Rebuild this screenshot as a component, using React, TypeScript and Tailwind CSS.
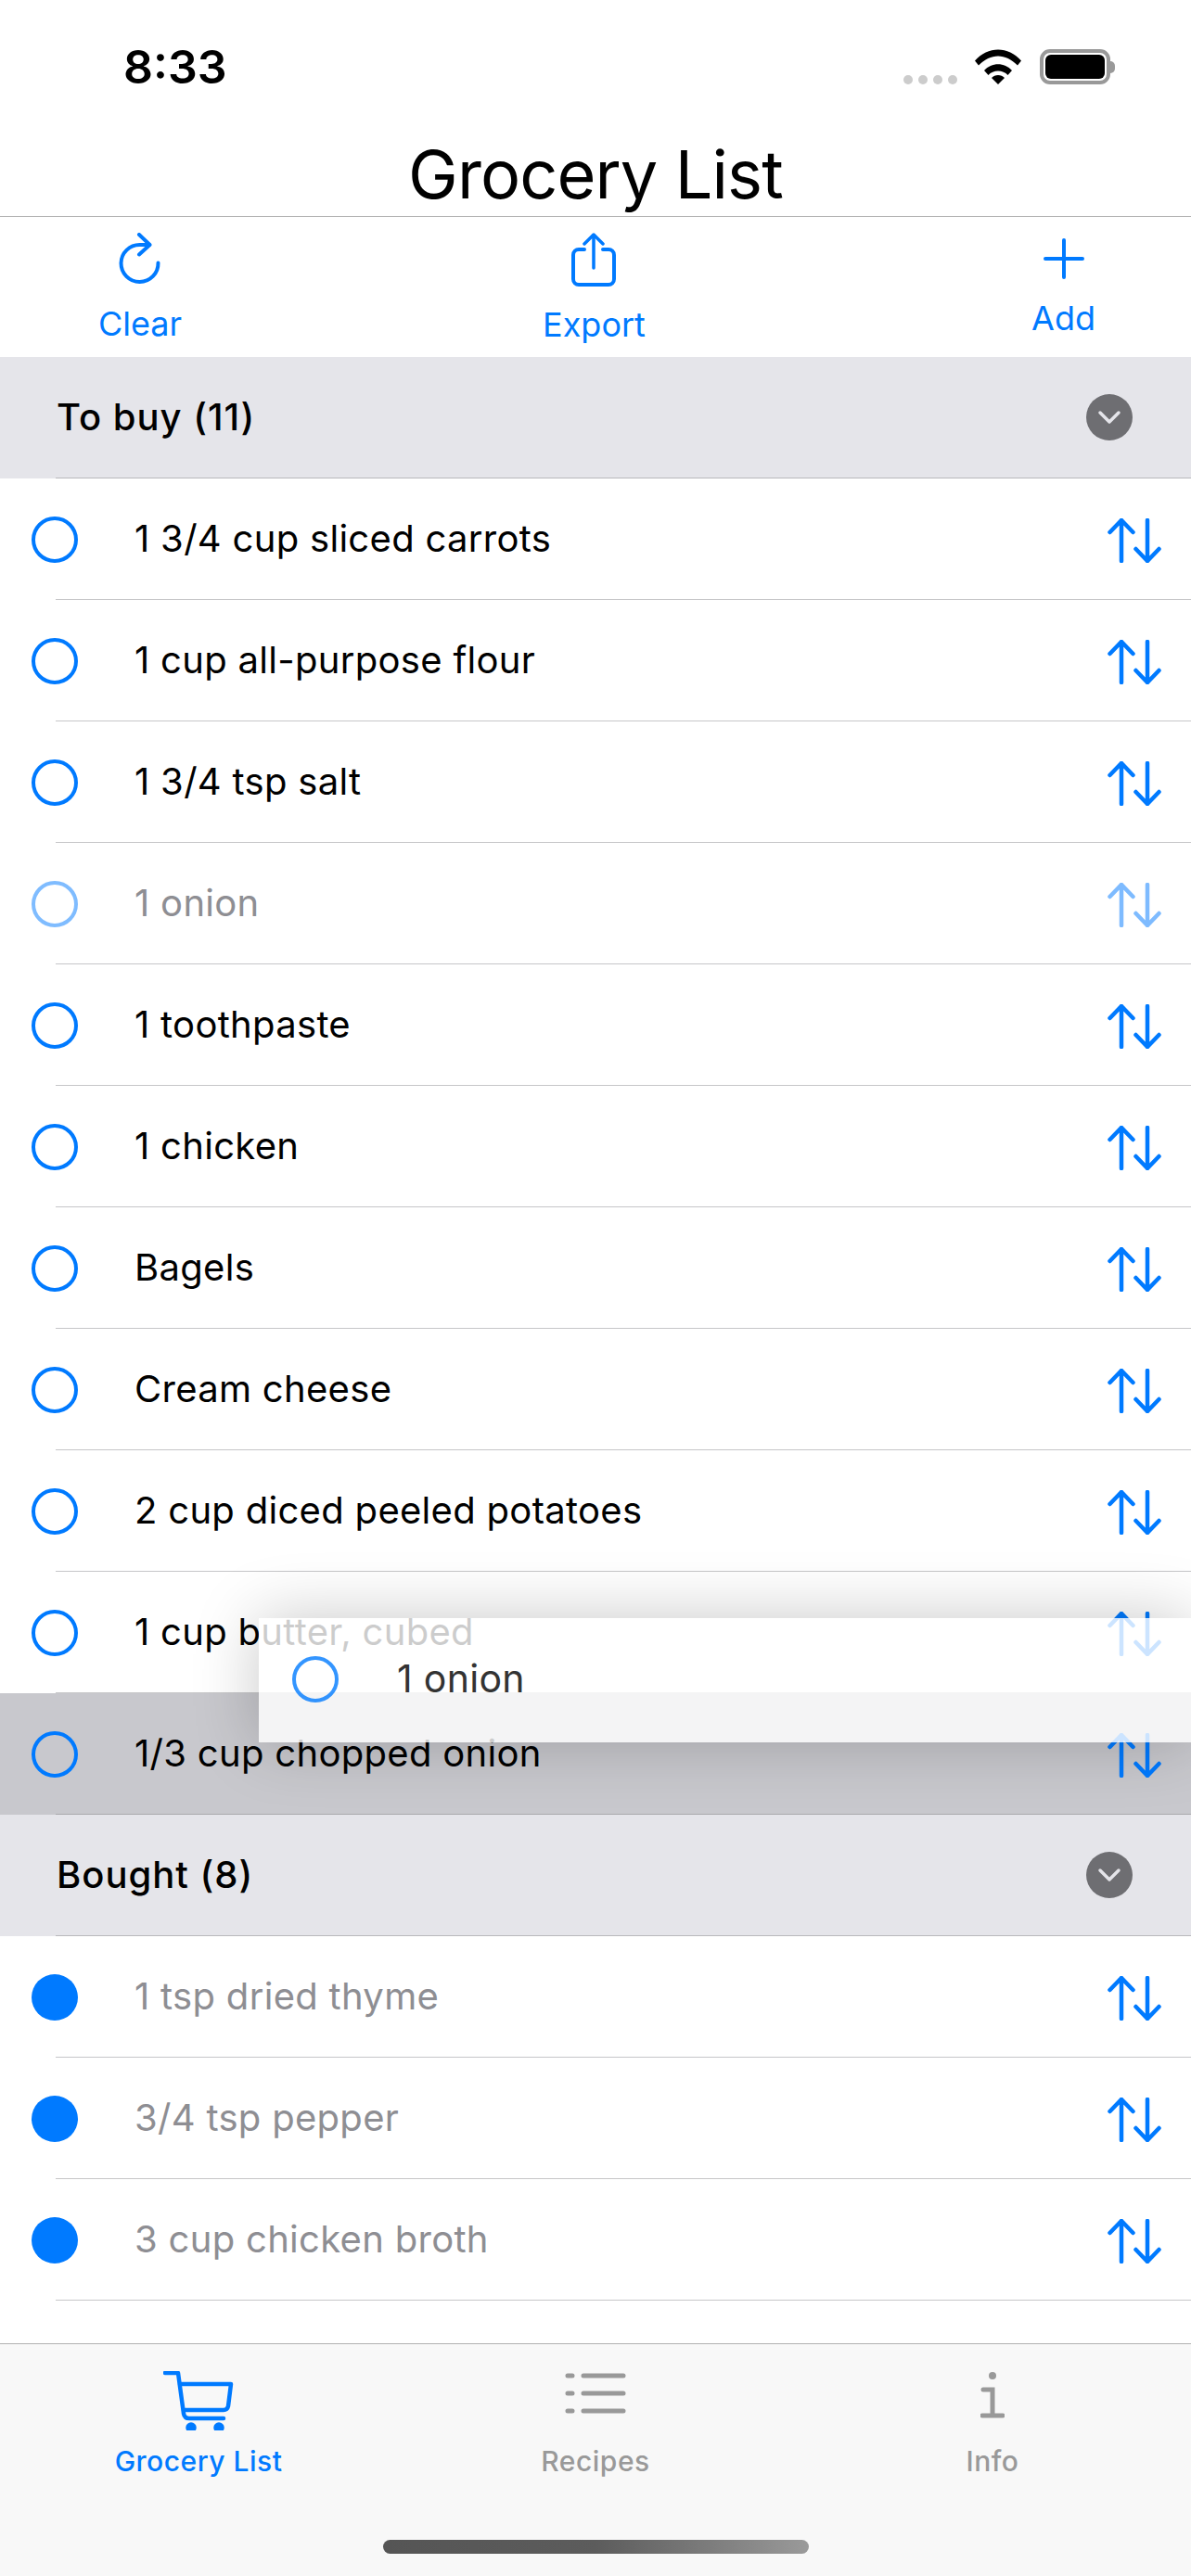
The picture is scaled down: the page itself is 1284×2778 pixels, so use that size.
import React from 'react';

const toBuy = [
  { name: '1 3/4 cup sliced carrots' },
  { name: '1 cup all-purpose flour' },
  { name: '1 3/4 tsp salt' },
  { name: '1 onion', dim: true },
  { name: '1 toothpaste' },
  { name: '1 chicken' },
  { name: 'Bagels' },
  { name: 'Cream cheese' },
  { name: '2 cup diced peeled potatoes' },
  { name: '1 cup butter, cubed' },
  { name: '1/3 cup chopped onion', active: true },
];

const bought = ['1 tsp dried thyme', '3/4 tsp pepper', '3 cup chicken broth'];

const ArrowsIcon = () => (
  <svg className="translate-y-[2px]" width="58" height="48" viewBox="0 0 58 48" fill="none" stroke="#007aff" strokeWidth="4.5" strokeLinecap="round" strokeLinejoin="round">
    <path d="M15 46V2M2.5 15L15 2l12.5 13" />
    <path d="M43 2v44M30.5 33L43 46l12.5-13" />
  </svg>
);

const Circle = ({ filled }: { filled?: boolean }) =>
  filled ? (
    <div className="w-[50px] h-[50px] rounded-full bg-[#007aff] shrink-0" />
  ) : (
    <div className="w-[50px] h-[50px] rounded-full border-[4.5px] border-[#007aff] shrink-0" />
  );

const Row = ({ name, dim, active, done }: { name: string; dim?: boolean; active?: boolean; done?: boolean }) => (
  <div className={active ? 'bg-[#c8c8cd]' : 'bg-white'}>
    <div className="h-[130px] flex items-center pl-[34px] pr-[32px]">
      <div className={`mt-[2px] ${dim ? 'opacity-50' : ''}`}>
        <Circle filled={done} />
      </div>
      <span className={`ml-[61px] flex-1 text-[40px] tracking-[0.3px] ${done || dim ? 'text-[#8e8e93]' : 'text-black'}`}>{name}</span>
      <div className={dim ? 'opacity-50' : ''}>
        <ArrowsIcon />
      </div>
    </div>
    <div className={`ml-[60px] h-px ${active ? 'bg-[#a9a9ad]' : 'bg-[#c6c6c8]'}`} />
  </div>
);

const SectionHeader = ({ title }: { title: string }) => (
  <div className="bg-[#e5e5ea]">
    <div className="h-[130px] flex items-center justify-between pl-[61px] pr-[63px] text-[40px] font-[450] tracking-[1px] text-black">
      <span>{title}</span>
      <div className="w-[50px] h-[50px] rounded-full bg-[#6e6e72] flex items-center justify-center">
        <svg width="26" height="16" viewBox="0 0 26 16" fill="none" stroke="#e5e5ea" strokeWidth="3.5" strokeLinecap="round" strokeLinejoin="round">
          <path d="M3 3l10 10L23 3" />
        </svg>
      </div>
    </div>
    <div className="ml-[60px] h-px bg-[#b8b8bb]" />
  </div>
);

const ToolButton = ({ label, icon, className }: { label: string; icon: React.ReactNode; className: string }) => (
  <div className={`flex flex-col items-center text-[36px] leading-[44px] text-[#007aff] ${className}`}>
    <div className="h-[58px] flex items-center">{icon}</div>
    <span>{label}</span>
  </div>
);

const TabItem = ({ label, active, icon }: { label: string; active?: boolean; icon: React.ReactNode }) => (
  <div className={`flex-1 flex flex-col items-center ${active ? 'text-[#007aff]' : 'text-[#999999]'}`}>
    <div className="h-[64px] flex items-start">{icon}</div>
    <span className="mt-[15px] text-[30px] leading-[36px] font-medium tracking-[0.5px]">{label}</span>
  </div>
);

export default function App() {
  return (
    <div className="w-[1284px] h-[2778px] bg-white overflow-hidden flex flex-col font-[Inter,sans-serif]">
      {/* Status bar */}
      <div className="h-[144px] pt-[46px] pl-[133px] pr-[82px] flex items-start justify-between">
        <span className="text-[50px] leading-[52px] font-semibold text-black">8:33</span>
        <div className="flex items-start pt-[7px]">
          <div className="flex gap-[6px] mt-[28px]">
            {[0, 1, 2, 3].map(i => (
              <div key={i} className="w-[10px] h-[10px] rounded-full bg-[#cccccc]" />
            ))}
          </div>
          <svg className="ml-[19px]" width="50" height="38" viewBox="0 0 50 38">
            <path d="M0 12.5C14-3.5 36-3.5 50 12.5l-4 5C33 4 17 4 4 17.5z" fill="black" />
            <path d="M10 23c8-9 22-9 30 0l-4.500 5c-5-6-16-6-21 0z" fill="black" />
            <path d="M18 31c3.500-4 10.500-4 14 0l-7 7z" fill="black" />
          </svg>
          <div className="ml-[20px] w-[76px] h-[38px] rounded-[11px] border-[4px] border-[#999999] p-[2px]">
            <div className="w-full h-full rounded-[6px] bg-black" />
          </div>
          <div className="mt-[13px] w-[5px] h-[13px] rounded-r-full bg-[#999999]" />
        </div>
      </div>

      {/* Title */}
      <div className="h-[90px] flex justify-center border-b border-[#b2b2b2]">
        <h1 className="text-[72px] leading-[88px] font-normal tracking-[-0.9px] text-black">Grocery List</h1>
      </div>

      {/* Toolbar */}
      <div className="h-[151px] grid grid-cols-3 items-start pl-[106px] pr-[103px]">
        <ToolButton
          label="Clear"
          className="justify-self-start pt-[16px] gap-[19px]"
          icon={
            <svg width="48" height="56" viewBox="0 0 48 56" fill="none" stroke="#007aff" strokeWidth="4" strokeLinecap="round" strokeLinejoin="round">
              <path d="M43.500 32.500A20 20 0 1 1 24 13h10" />
              <path d="M23 2l11.500 11L23 23.500" />
            </svg>
          }
        />
        <ToolButton
          label="Export"
          className="justify-self-center pt-[17px] gap-[19px] -translate-x-[3px]"
          icon={
            <svg width="48" height="58" viewBox="0 0 48 58" fill="none" stroke="#007aff" strokeWidth="4" strokeLinecap="round" strokeLinejoin="round">
              <path d="M14 18H8a6 6 0 0 0-6 6v26a6 6 0 0 0 6 6h32a6 6 0 0 0 6-6V24a6 6 0 0 0-6-6h-6" />
              <path d="M24 38V2M14 12L24 2l10 10" strokeWidth="3.500" />
            </svg>
          }
        />
        <ToolButton
          label="Add"
          className="justify-self-end pt-[16px] gap-[13px]"
          icon={
            <svg width="44" height="44" viewBox="0 0 44 44" fill="none" stroke="#007aff" strokeWidth="4" strokeLinecap="round">
              <path d="M22 2v40M2 22h40" />
            </svg>
          }
        />
      </div>

      {/* List */}
      <div className="relative flex-1">
        <SectionHeader title="To buy (11)" />
        {toBuy.map(item => (
          <Row key={item.name} name={item.name} dim={item.dim} active={item.active} />
        ))}
        <SectionHeader title="Bought (8)" />
        {bought.map(name => (
          <Row key={name} name={name} done />
        ))}

        {/* Row being dragged */}
        <div className="absolute left-[279px] right-0 top-[1360px] h-[134px] bg-white/80 shadow-[0_0_70px_rgba(0,0,0,0.22)] flex items-center pl-[36px] pb-[2px]">
          <div className="opacity-80">
            <Circle />
          </div>
          <span className="ml-[63px] text-[41px] tracking-[0.3px] text-[#333333]">1 onion</span>
        </div>
      </div>

      {/* Tab bar */}
      <div className="h-[251px] bg-[#f8f8f8] border-t border-[#b2b2b2] relative">
        <div className="flex pt-[29px]">
          <TabItem
            label="Grocery List"
            active
            icon={
              <svg width="76" height="64" viewBox="0 0 76 64" fill="none" stroke="#007aff" strokeWidth="4.500" strokeLinecap="round" strokeLinejoin="round">
                <path d="M2 2h14l6 44q1 5 6 5h37" />
                <path d="M18 14h55l-3 24q-1 4-5 4H22" />
                <circle cx="30" cy="61" r="3.500" fill="#007aff" />
                <circle cx="60" cy="61" r="3.500" fill="#007aff" />
              </svg>
            }
          />
          <TabItem
            label="Recipes"
            icon={
              <svg width="66" height="50" viewBox="0 0 66 50" fill="none" stroke="#999999" strokeWidth="5" strokeLinecap="round">
                <path d="M3 5h5M20 5h43M3 24h5M20 24h43M3 43h5M20 43h43" />
              </svg>
            }
          />
          <TabItem
            label="Info"
            icon={
              <svg width="26" height="52" viewBox="0 0 26 52" fill="none" stroke="#999999" strokeWidth="5" strokeLinecap="round">
                <circle cx="13" cy="5" r="4" fill="#999999" stroke="none" />
                <path d="M3 20h10v28M2 48h22" />
              </svg>
            }
          />
        </div>
        {/* Home indicator */}
        <div className="absolute left-[413px] top-[211px] w-[459px] h-[15px] rounded-full bg-gradient-to-r from-[#555555] via-[#5c5c5c] to-[#9a9a9a]" />
      </div>
    </div>
  );
}
